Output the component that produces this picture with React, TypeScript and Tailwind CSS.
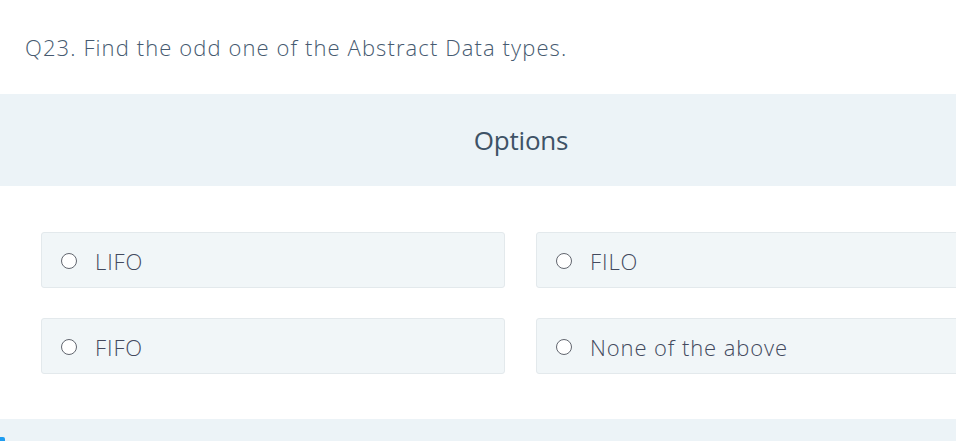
export default function App() {
    const options = ["LIFO", "FILO", "FIFO", "None of the above"];

    return (
        <div className="relative w-[956px] h-[441px] overflow-hidden bg-white font-['Open_Sans',sans-serif]">
            <div className="pl-[25px] pt-[33px] h-[94px]">
                <p className="text-[22px] leading-[28px] font-light tracking-[1.1px] text-[#465a70]">
                    Q23. Find the odd one of the Abstract Data types.
                </p>
            </div>
            <div className="h-[92px] bg-[#ecf3f7] flex items-center justify-center pl-[86px]">
                <span className="text-[26px] text-[#3e5266] tracking-[-0.2px]">
                    Options
                </span>
            </div>
            <div className="pl-[41px] pt-[46px] grid grid-cols-[464px_464px] gap-x-[31px] gap-y-[30px]">
                {options.map((o) => (
                    <div key={o} className="h-[56px] bg-[#f1f6f8] border border-[#e3e9ec] rounded-[3px] flex items-center pl-[19px] pt-[2px]">
                        <span className="w-[16px] h-[16px] rounded-full border-[1.5px] border-[#62666f] bg-white" />
                        <span className="ml-[18px] text-[22px] font-light tracking-[0.9px] text-[#434a5e]">{o}</span>
                    </div>
                ))}
            </div>
            <div className="mt-[45px] h-[22px] bg-[#ecf3f7]" />
            <div className="absolute left-0 bottom-0 w-[5px] h-[4px] bg-[#1e9cf0] rounded-tr-[2px]" />
        </div>
    );
}
